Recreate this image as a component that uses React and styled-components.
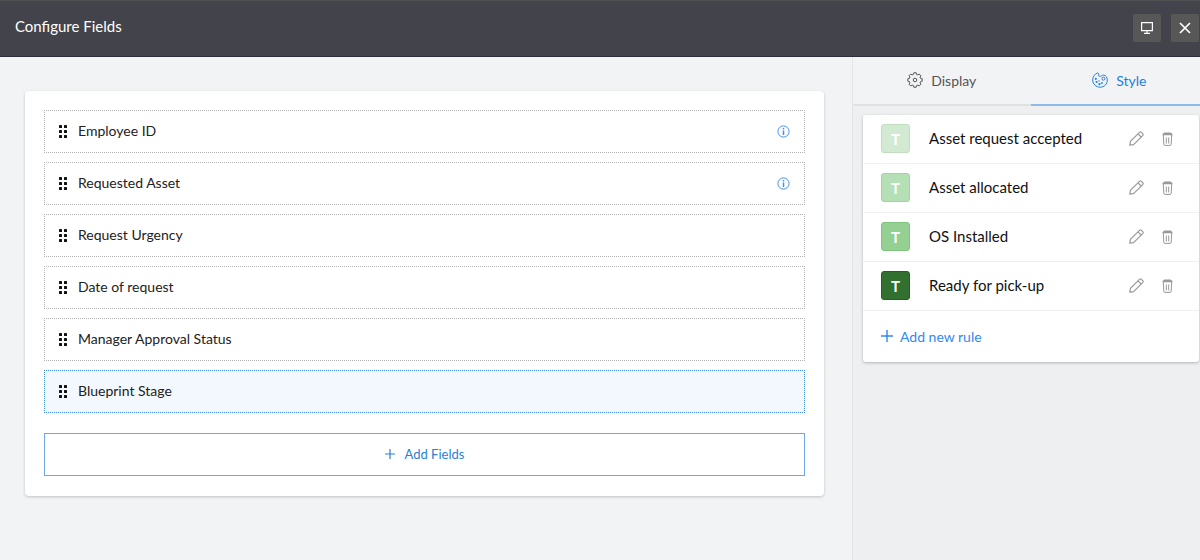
import React, { useState } from "react";
import styled, { createGlobalStyle } from "styled-components";

const GlobalStyle = createGlobalStyle`
  * {
    box-sizing: border-box;
  }
  body {
    margin: 0;
    background-color: #f2f3f5;
    font-family: Lato, "Open Sans", sans-serif;
    font-size: 14px;
    color: #222;
  }
  button {
    font-family: inherit;
    padding: 0;
    border: none;
    background: none;
    cursor: pointer;
  }
  svg {
    display: block;
    flex: none;
  }
`;

const Page = styled.div`
  display: flex;
  flex-flow: column;
  min-height: 100vh;
  overflow: hidden;
`;

const Header = styled.header`
  display: flex;
  justify-content: space-between;
  align-items: flex-start;
  height: 57px;
  padding: 13px 1px 0 15px;
  background-color: #43434b;
  border-top: 1px solid #505055;
  border-bottom: 1px solid #2f2d3a;
`;

const Title = styled.h1`
  margin: 0;
  font-size: 15px;
  font-weight: 400;
  line-height: 24px;
  color: white;
`;

const HeaderActions = styled.div`
  display: flex;
  gap: 10px;
`;

const HeaderButton = styled.button`
  display: flex;
  align-items: center;
  justify-content: center;
  width: 28px;
  height: 28px;
  border-radius: 2px;
  background-color: #575757;
  color: white;
`;

const Body = styled.div`
  display: flex;
  flex: 1;
`;

const Main = styled.main`
  flex: 1;
  min-width: 0;
  padding: 34px 28px 34px 25px;
`;

const FieldsCard = styled.section`
  padding: 19px 19px 20px;
  background-color: white;
  border-radius: 4px;
  box-shadow: 0 1px 3px rgba(0, 0, 0, 0.2);
`;

const FieldList = styled.ul`
  display: flex;
  flex-flow: column;
  gap: 9px;
  margin: 0 0 20px;
  padding: 0;
  list-style: none;
`;

const Field = styled.li`
  display: flex;
  align-items: center;
  height: 43px;
  padding: 0 14px;
  border: 1px dotted ${(props) => (props.$active ? "#3f8fe0" : "#b4b4b4")};
  background-color: ${(props) => (props.$active ? "#f3f8fe" : "white")};
  cursor: pointer;
`;

const FieldName = styled.span`
  flex: 1;
  margin-left: 11px;
  padding-bottom: 1px;
  line-height: 20px;
`;

const InfoButton = styled.button`
  color: #4a90e2;
`;

const AddFieldsButton = styled.button`
  display: flex;
  align-items: center;
  justify-content: center;
  gap: 10px;
  width: 100%;
  height: 43px;
  padding-bottom: 2px;
  border: 1px solid #6fa8e2;
  font-size: 13px;
  color: #2a7fd8;
`;

const Sidebar = styled.aside`
  width: 348px;
  overflow: hidden;
  background-color: #eeeff1;
  border-left: 1px solid #e4e5e7;
`;

// the tab bar runs a little past the right edge of the sidebar
const Tabs = styled.div`
  display: flex;
  margin-right: -8px;
`;

const Tab = styled.button`
  display: flex;
  flex: 1;
  align-items: center;
  justify-content: center;
  gap: 8px;
  height: 49px;
  padding-bottom: 1px;
  background-color: #f2f3f5;
  border-bottom: ${(props) =>
    props.$active ? "2px solid #8fbbea" : "2px solid #e0e1e3"};
  font-size: 14px;
  color: ${(props) => (props.$active ? "#2080e0" : "#555")};
`;

const RulesCard = styled.section`
  margin: 9px 1px 0 10px;
  background-color: white;
  border-radius: 3px;
  box-shadow: 0 1px 3px rgba(0, 0, 0, 0.25);
`;

const RuleList = styled.ul`
  margin: 0;
  padding: 0;
  list-style: none;
`;

const Rule = styled.li`
  display: flex;
  align-items: center;
  height: 49px;
  padding: 0 26px 1px 18px;
  border-bottom: 1px solid #f0f0f0;
`;

const RuleSwatch = styled.span`
  display: flex;
  align-items: center;
  justify-content: center;
  width: 29px;
  height: 29px;
  border: 1px solid ${(props) => props.$border};
  border-radius: 3px;
  background-color: ${(props) => props.$color};
  font-size: 15px;
  font-weight: 700;
  color: white;
`;

const RuleName = styled.span`
  flex: 1;
  margin-left: 19px;
  padding-bottom: 1px;
  font-size: 15px;
  line-height: 20px;
  color: #111;
`;

const RuleActions = styled.div`
  display: flex;
  gap: 18px;
`;

const IconButton = styled.button`
  color: #999;
`;

const AddRuleButton = styled.button`
  display: flex;
  align-items: center;
  gap: 7px;
  height: 51px;
  padding: 0 18px 1px;
  font-size: 14px;
  color: #3088f4;
`;

const MonitorIcon = () => (
  <svg width="14" height="14" viewBox="0 0 14 14" fill="none" stroke="currentColor">
    <path d="M1.6 1.6h10.800v8H1.600z" strokeWidth="1.200" />
    <path d="M7 9.500v2.500M4 12.300h6" strokeWidth="1.200" />
  </svg>
);

const CloseIcon = () => (
  <svg width="12" height="12" viewBox="0 0 12 12" fill="none" stroke="currentColor">
    <path d="M1 1l10 10M11 1L1 11" strokeWidth="1.700" />
  </svg>
);

const GripIcon = () => (
  <svg width="8" height="13" viewBox="0 0 8 13" fill="#111">
    {[0, 5, 10].map((y) => (
      <React.Fragment key={y}>
        <rect x="0" y={y} width="3" height="3" rx="0.5" />
        <rect x="5" y={y} width="3" height="3" rx="0.5" />
      </React.Fragment>
    ))}
  </svg>
);

const InfoIcon = () => (
  <svg width="13" height="13" viewBox="0 0 13 13" fill="none" stroke="currentColor">
    <circle cx="6.500" cy="6.500" r="5.600" />
    <path d="M6.500 3v1.500M6.500 5.400v4.500" strokeWidth="1.500" />
  </svg>
);

const PlusIcon = ({ size }) => (
  <svg width={size} height={size} viewBox="0 0 11 11" fill="none" stroke="currentColor">
    <path d="M5.500 0v11M0 5.500h11" strokeWidth="1.300" />
  </svg>
);

// outline of a gear with eight teeth, as angle / radius pairs for each tooth
const gearPoints = [0, 45, 90, 135, 180, 225, 270, 315]
  .flatMap((tooth) =>
    [
      [-15, 5.8],
      [-10, 7.3],
      [10, 7.3],
      [15, 5.8],
    ].map(([offset, radius]) => {
      const angle = ((tooth + offset) * Math.PI) / 180;
      const x = 8 + radius * Math.cos(angle);
      const y = 8 + radius * Math.sin(angle);
      return `${x.toFixed(2)},${y.toFixed(2)}`;
    })
  )
  .join(" ");

const GearIcon = () => (
  <svg width="16" height="16" viewBox="0 0 16 16" fill="none" stroke="currentColor" strokeLinejoin="round">
    <polygon points={gearPoints} />
    <circle cx="8" cy="8" r="1.800" />
  </svg>
);

const PaletteIcon = () => (
  <svg width="16" height="16" viewBox="0 0 16 16" fill="none" stroke="currentColor" strokeLinejoin="round">
    <path d="M5.200 1C2.500 2.200.7 4.900.7 7.900c0 4.100 3.300 7.300 7.400 7.300s7.200-3.100 7.200-7.200c0-2.600-1.400-4.600-3.600-4.900-1.700-.2-2.600 1.500-4.100 1.300C6.200 4.200 6.800 3 6.700 2 6.600 1.200 6 .7 5.200 1z" />
    <circle cx="11.400" cy="6.700" r="1.500" />
    <g fill="currentColor" stroke="none">
      <circle cx="3.800" cy="6.800" r="1.100" />
      <circle cx="4.600" cy="10" r="1.100" />
      <circle cx="7.500" cy="12.200" r="1.100" />
      <circle cx="7" cy="9" r=".7" />
      <circle cx="10" cy="11" r=".9" />
    </g>
  </svg>
);

const PencilIcon = () => (
  <svg width="15" height="15" viewBox="0 0 15 15" fill="none" stroke="currentColor" strokeWidth="1.200" strokeLinejoin="round">
    <path d="M.8 14.200l.6-3.800L10.700 1.100q.7-.6 1.400 0l1.800 1.800q.6.700 0 1.400L4.600 13.600z" />
    <path d="M9 2.800L12.200 6" />
  </svg>
);

const TrashIcon = () => (
  <svg width="11" height="14" viewBox="0 0 11 14" fill="none" stroke="currentColor">
    <path d="M2.500.5h6l2 1.500v1.300H.5V2z" fill="currentColor" stroke="none" />
    <path d="M1.300 3l.5 9.300q.1 1.100 1.200 1.100h5q1.100 0 1.200-1.100L9.700 3" />
    <path d="M4.300 5.500v6M6.700 5.500v6" />
  </svg>
);

const fields = [
  { name: "Employee ID", info: true },
  { name: "Requested Asset", info: true },
  { name: "Request Urgency" },
  { name: "Date of request" },
  { name: "Manager Approval Status" },
  { name: "Blueprint Stage" },
];

const rules = [
  { name: "Asset request accepted", color: "#d3ead2", border: "#c2dec1" },
  { name: "Asset allocated", color: "#b5dfb4", border: "#a3d2a2" },
  { name: "OS Installed", color: "#93d092", border: "#80c57f" },
  { name: "Ready for pick-up", color: "#31702e", border: "#236020" },
];

export default function App() {
  const [activeField, setActiveField] = useState("Blueprint Stage");
  const [activeTab, setActiveTab] = useState("style");

  return (
    <>
      <GlobalStyle />
      <Page>
        <Header>
          <Title>Configure Fields</Title>
          <HeaderActions>
            <HeaderButton aria-label="Preview">
              <MonitorIcon />
            </HeaderButton>
            <HeaderButton aria-label="Close">
              <CloseIcon />
            </HeaderButton>
          </HeaderActions>
        </Header>
        <Body>
          <Main>
            <FieldsCard>
              <FieldList>
                {fields.map((field) => (
                  <Field
                    key={field.name}
                    $active={field.name === activeField}
                    onClick={() => setActiveField(field.name)}
                  >
                    <GripIcon />
                    <FieldName>{field.name}</FieldName>
                    {field.info && (
                      <InfoButton aria-label={`About ${field.name}`}>
                        <InfoIcon />
                      </InfoButton>
                    )}
                  </Field>
                ))}
              </FieldList>
              <AddFieldsButton>
                <PlusIcon size={10} />
                Add Fields
              </AddFieldsButton>
            </FieldsCard>
          </Main>
          <Sidebar>
            <Tabs role="tablist">
              <Tab
                role="tab"
                aria-selected={activeTab === "display"}
                $active={activeTab === "display"}
                onClick={() => setActiveTab("display")}
              >
                <GearIcon />
                Display
              </Tab>
              <Tab
                role="tab"
                aria-selected={activeTab === "style"}
                $active={activeTab === "style"}
                onClick={() => setActiveTab("style")}
              >
                <PaletteIcon />
                Style
              </Tab>
            </Tabs>
            <RulesCard>
              <RuleList>
                {rules.map((rule) => (
                  <Rule key={rule.name}>
                    <RuleSwatch $color={rule.color} $border={rule.border}>
                      T
                    </RuleSwatch>
                    <RuleName>{rule.name}</RuleName>
                    <RuleActions>
                      <IconButton aria-label={`Edit ${rule.name}`}>
                        <PencilIcon />
                      </IconButton>
                      <IconButton aria-label={`Delete ${rule.name}`}>
                        <TrashIcon />
                      </IconButton>
                    </RuleActions>
                  </Rule>
                ))}
              </RuleList>
              <AddRuleButton>
                <PlusIcon size={12} />
                Add new rule
              </AddRuleButton>
            </RulesCard>
          </Sidebar>
        </Body>
      </Page>
    </>
  );
}
